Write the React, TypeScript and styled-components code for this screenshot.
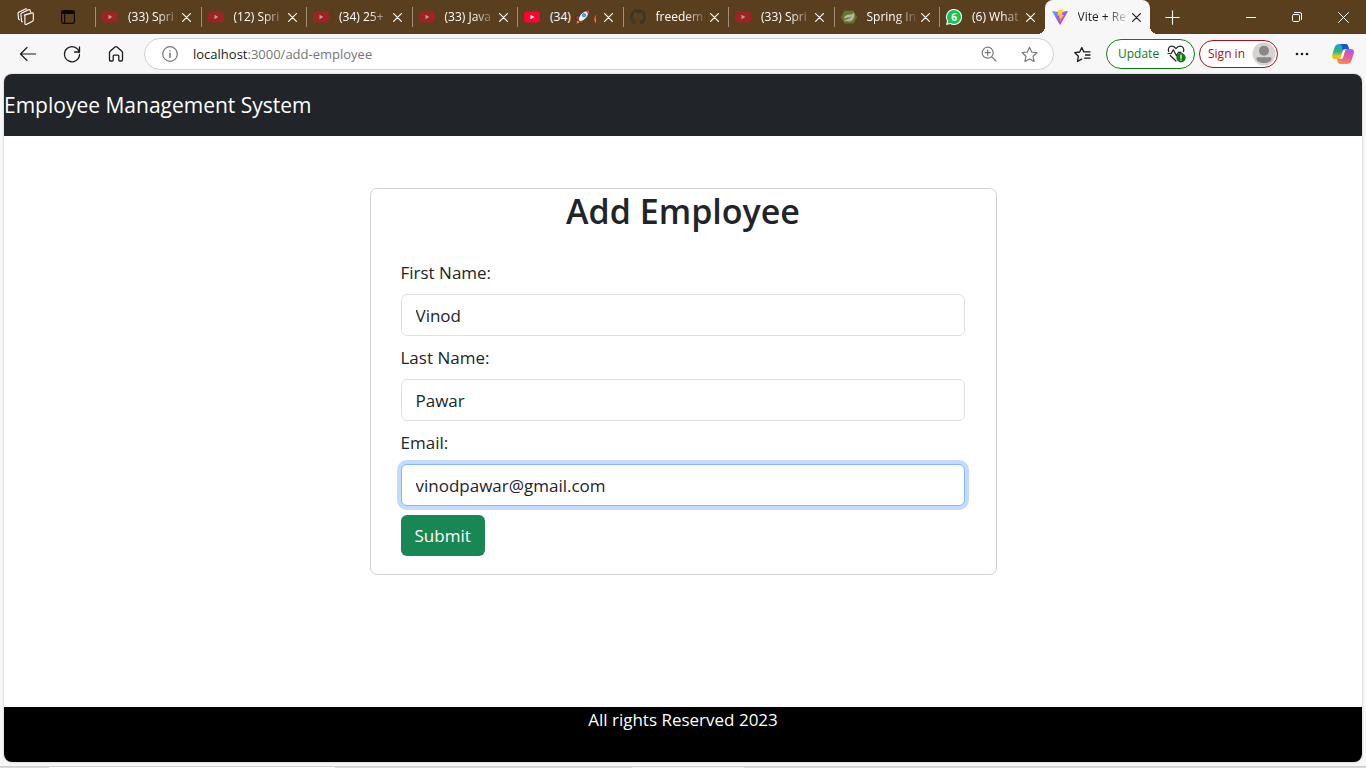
import React from "react";
import styled, { createGlobalStyle, css } from "styled-components";

const GlobalStyle = createGlobalStyle`
  *, *::before, *::after { box-sizing: border-box; }
  body {
    margin: 0;
    background: #f7f7f7;
    color: #212529;
    font-family: "Segoe UI", "Open Sans", "Noto Sans", sans-serif;
  }
  button, input { font-family: inherit; }
  svg { display: block; flex: none; }
`;

const Window = styled.div`
  display: flex;
  flex-direction: column;
  min-height: 100vh;
`;

const iconButton = css`
  display: flex;
  align-items: center;
  justify-content: center;
  flex: none;
  padding: 0;
  border: 0;
  background: transparent;
  color: inherit;
`;

/* Tab strip */

const TabStrip = styled.div`
  display: flex;
  height: 34px;
  background: #5a3f1e;
  color: #fff;
`;

const StripTools = styled.div`
  display: flex;
  padding: 0 6px 0 5px;
`;

const StripButton = styled.button<{ $width: number }>`
  ${iconButton}
  width: ${(p) => p.$width}px;
  height: 34px;
`;

const WindowControls = styled.div`
  display: flex;
  margin-left: 34px;
`;

const Tabs = styled.div`
  display: flex;
  flex: 1;
  min-width: 0;
`;

const Tab = styled.div<{ $active?: boolean }>`
  position: relative;
  display: flex;
  flex: 1 1 0;
  min-width: 0;
  align-items: center;
  padding: 0 9px 0 7px;
  ${(p) =>
    p.$active
      ? css`
          background: #f7f7f7;
          color: #1b1b1b;
          border-radius: 8px 8px 0 0;
          &::before,
          &::after {
            content: "";
            position: absolute;
            bottom: 0;
            width: 8px;
            height: 8px;
          }
          &::before {
            right: 100%;
            background: radial-gradient(circle at 0 0, transparent 8px, #f7f7f7 8px);
          }
          &::after {
            left: 100%;
            background: radial-gradient(circle at 100% 0, transparent 8px, #f7f7f7 8px);
          }
        `
      : css`
          &::before {
            content: "";
            position: absolute;
            left: 0;
            top: 7px;
            width: 1px;
            height: 20px;
            background: #a08f78;
          }
        `}
`;

const TabTitle = styled.span`
  display: flex;
  align-items: center;
  flex: 1;
  min-width: 0;
  margin: 0 1px 0 10px;
  overflow: hidden;
  white-space: nowrap;
  font-size: 12px;
  line-height: 20px;
  mask-image: linear-gradient(to right, #000 55%, transparent);
`;

const EmojiTitle = styled(TabTitle)`
  gap: 4px;
  margin-right: 8px;
  mask-image: none;
`;

const TabClose = styled.button`
  ${iconButton}
  width: 10px;
  height: 20px;
`;

/* Toolbar */

const Toolbar = styled.div`
  display: flex;
  align-items: center;
  height: 40px;
  padding: 0 6px;
  color: #1b1b1b;
`;

const ToolButton = styled.button<{ $width: number }>`
  ${iconButton}
  width: ${(p) => p.$width}px;
  height: 32px;
`;

const AddressBar = styled.div`
  display: flex;
  align-items: center;
  flex: 1;
  min-width: 0;
  height: 32px;
  margin: 0 4px 0 6px;
  padding: 0 4px 0 5px;
  border: 1px solid #d0d0d0;
  border-radius: 16px;
  background: #fff;
  color: #767676;
`;

const Address = styled.div`
  flex: 1;
  min-width: 0;
  padding-left: 3px;
  font-size: 13px;
  line-height: 20px;
  white-space: nowrap;
`;

const Host = styled.span`
  color: #1b1b1b;
`;

const Pill = styled.button<{ $tone: string; $height: number }>`
  display: flex;
  align-items: center;
  flex: none;
  justify-content: space-between;
  height: ${(p) => p.$height}px;
  border: 1px solid ${(p) => p.$tone};
  border-radius: 16px;
  background: #fff;
  color: ${(p) => p.$tone};
  font-size: 12px;
  line-height: 20px;
  white-space: nowrap;
`;

const UpdatePill = styled(Pill)`
  width: 89px;
  margin-right: 4px;
  padding: 0 8px 0 11px;
`;

const SignInPill = styled(Pill)`
  width: 79px;
  padding: 0 1px 0 8px;
`;

/* Page */

const Page = styled.div`
  display: flex;
  flex: 1;
  flex-direction: column;
  margin: 0 4px;
  overflow: hidden;
  border-radius: 8px;
  background: #fff;
  box-shadow: 0 0 2px #b0b0b0;
`;

const Navbar = styled.header`
  display: flex;
  align-items: center;
  height: 62px;
  background: #212529;
`;

const Brand = styled.a`
  color: #fff;
  font-size: 21px;
  line-height: 32px;
  text-decoration: none;
`;

const Main = styled.main`
  flex: 1;
  width: 100%;
  max-width: 1254px;
  margin: 0 auto;
  padding: 52px 0;
`;

const Card = styled.section`
  width: 50%;
  min-width: 320px;
  margin: 0 auto;
  border: 1px solid #d0d1d2;
  border-radius: 7px;
`;

const CardTitle = styled.h2`
  margin: 0;
  font-size: 34px;
  font-weight: 600;
  line-height: 44px;
  text-align: center;
`;

const Form = styled.form`
  display: flex;
  flex-direction: column;
  align-items: flex-start;
  gap: 9px;
  padding: 27px 31px 18px 30px;
`;

const Field = styled.div`
  display: flex;
  flex-direction: column;
  gap: 8px;
  width: 100%;
`;

const Label = styled.label`
  font-size: 17px;
  line-height: 26px;
`;

const TextInput = styled.input<{ $highlighted?: boolean }>`
  width: 100%;
  height: 42px;
  padding: 0 14px;
  border: 1px solid ${(p) => (p.$highlighted ? "#86b7fe" : "#dee2e6")};
  border-radius: 6px;
  outline: 0;
  background: #fff;
  box-shadow: ${(p) => (p.$highlighted ? "0 0 0 4px #c2dbfe" : "none")};
  color: #212529;
  font-size: 17px;
`;

const SubmitButton = styled.button`
  height: 41px;
  padding: 0 14px;
  border: 0;
  border-radius: 6px;
  background: #198754;
  color: #fff;
  font-size: 17px;
  line-height: 26px;
`;

const Footer = styled.footer`
  height: 55px;
  background: #000;
  color: #fff;
  font-size: 17px;
  line-height: 26px;
  text-align: center;
`;

const Taskbar = styled.div`
  display: flex;
  height: 2px;
  margin-top: 4px;
  background: #dadada;
`;

const TaskSlot = styled.div<{ $grow: number; $fill: string }>`
  flex: ${(p) => p.$grow} 1 0;
  border-top: 1px solid #cfcfcf;
  background: ${(p) => p.$fill};
`;

/* Drawings */

const line = { fill: "none", stroke: "currentColor", strokeLinecap: "round", strokeLinejoin: "round" } as const;

const YouTube = ({ muted }: { muted?: boolean }) => (
  <svg width="16" height="16" viewBox="0 0 16 16">
    <rect y="2.5" width="16" height="11" rx="2.5" fill={muted ? "#9b2424" : "#ff0033"} />
    <path d="M6.5 5.8v4.4L10.3 8z" fill={muted ? "#bc9d90" : "#fff"} />
  </svg>
);

const GitHub = () => (
  <svg width="16" height="16" viewBox="0 0 16 16" fill="#413427">
    <path d="M8 0C3.58 0 0 3.58 0 8c0 3.54 2.29 6.53 5.47 7.59.4.07.55-.17.55-.38 0-.19-.01-.82-.01-1.49-2.01.37-2.53-.49-2.69-.94-.09-.23-.48-.94-.82-1.13-.28-.15-.68-.52-.01-.53.63-.01 1.08.58 1.23.82.72 1.21 1.87.87 2.33.66.07-.52.28-.87.51-1.07-1.78-.2-3.64-.89-3.64-3.95 0-.87.31-1.59.82-2.15-.08-.2-.36-1.02.08-2.12 0 0 .67-.21 2.2.82a7.6 7.6 0 0 1 4 0c1.53-1.04 2.2-.82 2.2-.82.44 1.1.16 1.92.08 2.12.51.56.82 1.27.82 2.15 0 3.07-1.87 3.75-3.65 3.95.29.25.54.73.54 1.48 0 1.07-.01 1.93-.01 2.2 0 .21.15.46.55.38A8 8 0 0 0 16 8c0-4.42-3.58-8-8-8z" />
  </svg>
);

const SpringLogo = () => (
  <svg width="16" height="16" viewBox="0 0 16 16">
    <path d="M4.3 1.5h7.4q.7 0 1 .6l3 5.3q.3.6 0 1.2l-3 5.3q-.3.6-1 .6H4.3q-.7 0-1-.6l-3-5.3q-.3-.6 0-1.2l3-5.3q.3-.6 1-.6z" fill="#60762f" />
    <path d="M12.8 3.5c-1 2-2.4 1.7-5.2 2.1C4.7 6 3 7.5 3.1 9.7c1.8-.6 5-.5 7.5-2.6-1.6 2.6-4 3.4-6.8 4 2.5 2.1 6.7 1.7 8.6-1.2 1.4-2.2 1.1-4.4.4-6.4z" fill="#b5b59b" />
    <circle cx="4.1" cy="11.8" r=".7" fill="#b5b59b" />
  </svg>
);

const WhatsApp = () => (
  <svg width="16" height="16" viewBox="0 0 16 16">
    <path d="M8 0a8 8 0 0 0-7 11.9L0 16l4.2-1A8 8 0 1 0 8 0z" fill="#fff" />
    <path d="M8 1.1A6.9 6.9 0 0 0 2.2 11.8l-.7 2.7 2.8-.7A6.9 6.9 0 1 0 8 1.1z" fill="#16c553" />
    <text x="8" y="11.6" fill="#fff" fontSize="10" fontWeight="700" textAnchor="middle">6</text>
  </svg>
);

const ViteLogo = () => (
  <svg width="16" height="16" viewBox="0 0 16 16">
    <defs>
      <linearGradient id="viteShell" x1="0" y1="0" x2=".6" y2="1">
        <stop offset="0" stopColor="#41b9ff" />
        <stop offset=".5" stopColor="#9a58ff" />
        <stop offset="1" stopColor="#bd34fe" />
      </linearGradient>
      <linearGradient id="viteBolt" x1="0" y1="0" x2="0" y2="1">
        <stop offset="0" stopColor="#ffdf40" />
        <stop offset="1" stopColor="#ffa800" />
      </linearGradient>
    </defs>
    <path d="M15.8 2.6 8.4 15.5q-.3.5-.7 0L.2 2.6q-.3-.7.5-.6L8 3.3 15.3 2q.8-.1.5.6z" fill="url(#viteShell)" />
    <path d="M11.4.1 6 1.2l-.4 5.6 2-.4-.6 3 1.5-.4-.8 4.2 4.2-7.5-2 .4z" fill="url(#viteBolt)" />
  </svg>
);

const Rocket = () => (
  <svg width="15" height="16" viewBox="0 0 15 16">
    <path d="M4.5 6.5 1.2 7l-.7 3 3 .2zM8.5 10.5 8 14l-2.8 1-.4-3.5z" fill="#d83b2b" stroke="#222" strokeWidth=".6" />
    <path d="M1.5 15 2.4 11l2.4 2.3z" fill="#ff9f2e" stroke="#a83510" strokeWidth=".5" />
    <path d="M3.2 10.8C4 6 7.6 1.8 14 1.2c0 6-3.6 10-8.8 11.6z" fill="#eaf6ff" stroke="#222" strokeWidth=".7" />
    <path d="M10.5 2.1 14 1.2l-.8 4z" fill="#e6402e" />
    <circle cx="9" cy="6.2" r="1.8" fill="#35b5ef" stroke="#1d577a" strokeWidth=".5" />
  </svg>
);

const Flame = () => (
  <svg width="10" height="14" viewBox="0 0 10 14">
    <path d="M5 0C5 3 0 5 0 9.2 0 12 2 14 5 14s5-2 5-5C10 5 6 4 5 0z" fill="#e8531c" />
    <path d="M5 5C4 7.500 1.500 8 1.500 10.600 1.500 12.800 3 14 5 14s3.500-1.500 3.500-3.500C8.500 8 6 7.500 5 5z" fill="#ffc928" />
  </svg>
);

const CloseGlyph = () => (
  <svg width="9" height="9" viewBox="0 0 9 9" {...line} strokeWidth="1.2">
    <path d="M.6.6l7.800 7.800M8.400.6L.6 8.400" />
  </svg>
);

const Workspaces = () => (
  <svg width="18" height="18" viewBox="0 0 18 18" {...line} strokeWidth="1.100">
    <path d="M7.300 7.100 15 4.900q1.200-.3 1.300.9v6.200q0 .9-.8 1.200l-6.300 3.200q-1.200.4-1.300-.8V8.100q0-.8-.6-1z" />
    <path d="M5.500 13.800q-.7.1-1-.8L3.900 6.400q-.1-1 .8-1.400l7-3.200q1-.4 1.400.5l.5 1.500" />
    <path d="M2.600 11.700q-.8 0-1-.8L1 5.600q-.1-.9.7-1.300L8.400 1q.8-.4 1.400.2" />
  </svg>
);

const TabActions = () => (
  <svg width="14" height="14" viewBox="0 0 14 14" fill="none" stroke="#0b0805" strokeWidth="1.100">
    <rect x=".6" y=".6" width="12.800" height="12.800" rx="2.200" />
    <path d="M1 2.500h12M1 1.500h12M1 3.500h12M3.700 4v9" />
  </svg>
);

const BackArrow = () => (
  <svg width="18" height="16" viewBox="0 0 18 16" {...line} strokeWidth="1.200">
    <path d="M16.500 8H1.500M8 1.500 1.500 8 8 14.500" />
  </svg>
);

const Reload = () => (
  <svg width="18" height="18" viewBox="0 0 18 18" {...line} strokeWidth="1.300">
    <path d="M16.300 7.500A7.500 7.500 0 1 0 16.500 9.500M16.500 2v5h-5" />
  </svg>
);

const Home = () => (
  <svg width="16" height="18" viewBox="0 0 16 18" {...line} strokeWidth="1.300">
    <path d="M1.500 7.600q0-.8.6-1.300L7 2q1-.8 2 0l4.900 4.300q.6.500.6 1.300v7.100q0 1.300-1.300 1.300h-1.400q-1 0-1-1v-4q0-.9-.9-.9H6.100q-.9 0-.9.900v4q0 1-1 1H2.800q-1.300 0-1.300-1.300z" />
  </svg>
);

const Info = () => (
  <svg width="16" height="16" viewBox="0 0 16 16" {...line} strokeWidth="1.200">
    <circle cx="8" cy="8" r="7.300" />
    <path d="M8 7.300v4M8 4.700v.1" strokeWidth="1.500" />
  </svg>
);

const ZoomIn = () => (
  <svg width="16" height="16" viewBox="0 0 16 16" {...line} strokeWidth="1.200">
    <circle cx="6.700" cy="6.700" r="5.500" />
    <path d="M10.800 10.800 15 15M6.700 4.200v5M4.200 6.700h5" />
  </svg>
);

const Star = () => (
  <svg width="17" height="17" viewBox="0 0 17 17" {...line} strokeWidth="1.200">
    <path d="M8.500 1.200 10.700 6l5.100.7-3.700 3.600.9 5.200-4.500-2.500L4 15.500l.9-5.200L1.200 6.700 6.300 6z" />
  </svg>
);

const Favorites = () => (
  <svg width="17" height="17" viewBox="0 0 17 17" {...line} strokeWidth="1.300">
    <path d="M10.500 5.800H16M11.500 9H16M10.500 12.200H16M9.700 5.800 7.800 1.500 5.700 6l-4.900.7 3.600 3.500-.9 5.200 4.200-2.300" />
  </svg>
);

const HeartPulse = () => (
  <svg width="19" height="18" viewBox="0 0 19 18">
    <g {...line} stroke="#222" strokeWidth="1.200">
      <path d="M1.700 6.500C.6 3.700 2.200 1.200 4.800 1.200c1.800 0 3 .9 4.200 2.300 1.200-1.400 2.400-2.300 4.200-2.300 2.600 0 4.300 2.500 3.200 5.300M3.300 10.500 9 16" />
      <path d="M1 8.500h3.300l2-3.700 3.200 6 2-3.500h2.500" />
    </g>
    <circle cx="14" cy="12.800" r="4.700" fill="#107c10" />
    <path d="M14 10.200v3M14 15v.2" stroke="#fff" strokeWidth="1.300" strokeLinecap="round" />
  </svg>
);

const Avatar = () => (
  <svg width="24" height="24" viewBox="0 0 24 24">
    <circle cx="12" cy="12" r="11.500" fill="#d6d4d1" />
    <circle cx="12" cy="8.700" r="5" fill="#8b8987" />
    <path d="M4.500 16.500q0-1.300 1.300-1.300h12.400q1.300 0 1.300 1.300c0 2.800-3.300 4.500-7.500 4.500s-7.500-1.700-7.500-4.500z" fill="#8b8987" />
  </svg>
);

const More = () => (
  <svg width="14" height="4" viewBox="0 0 14 4" fill="#1b1b1b">
    <circle cx="2" cy="2" r="1.300" />
    <circle cx="7" cy="2" r="1.300" />
    <circle cx="12" cy="2" r="1.300" />
  </svg>
);

const Copilot = () => (
  <svg width="22" height="20" viewBox="0 0 22 20">
    <defs>
      <linearGradient id="copilotLeft" x1="0" y1="0" x2="0" y2="1">
        <stop offset="0" stopColor="#199ff0" />
        <stop offset=".5" stopColor="#2eb57b" />
        <stop offset=".8" stopColor="#d7cf22" />
        <stop offset="1" stopColor="#f5b323" />
      </linearGradient>
      <linearGradient id="copilotRight" x1=".6" y1="0" x2=".3" y2="1">
        <stop offset="0" stopColor="#a45bee" />
        <stop offset=".5" stopColor="#ec5b91" />
        <stop offset="1" stopColor="#ff8d48" />
      </linearGradient>
    </defs>
    <path d="M7.500 0h6.300q1.700 0 2.200 1.700L17 5h-3.800q-1.400 0-1.900 1.500L9 13.500q-.6 1.500-2.200 1.500H3.500Q-.8 15 .3 10.500L2.700 3Q3.800 0 7.500 0z" fill="url(#copilotLeft)" />
    <path d="M7.500 0h6.300q1.700 0 2.200 1.700L17 5h-3.800q-1.400 0-1.900 1.500L10.500 9Q10.600 0 7.500 0z" fill="#1757c8" />
    <path d="M14.500 20H8.200q-1.700 0-2.200-1.700L5 15h3.800q1.400 0 1.900-1.500L13 6.500Q13.600 5 15.200 5h3.300q4.300 0 3.200 4.500L19.300 17q-1.100 3-4.800 3z" fill="url(#copilotRight)" />
    <path d="M10.900 5.800h2.300L10.900 14.200H8.600z" fill="#f7f7f7" />
  </svg>
);

const Plus = () => (
  <svg width="15" height="15" viewBox="0 0 15 15" {...line} strokeWidth="1.100">
    <path d="M7.500.8v13.400M.8 7.500h13.400" />
  </svg>
);

const Minimize = () => (
  <svg width="10" height="2" viewBox="0 0 10 2">
    <path d="M0 1.500h10" stroke="#fff" />
  </svg>
);

const Restore = () => (
  <svg width="10" height="10" viewBox="0 0 10 10" {...line}>
    <rect x=".5" y="2.500" width="7" height="7" rx="1.200" />
    <path d="M2.500.5H8A1.500 1.500 0 0 1 9.500 2v5.500" />
  </svg>
);

const WindowClose = () => (
  <svg width="11" height="11" viewBox="0 0 11 11" {...line}>
    <path d="M.5.5l10 10M10.500.5l-10 10" />
  </svg>
);

const tabs: { title: string; icon: React.ReactNode; active?: boolean; emoji?: boolean }[] = [
  { title: "(33) Spri", icon: <YouTube muted /> },
  { title: "(12) Spri", icon: <YouTube muted /> },
  { title: "(34) 25+", icon: <YouTube muted /> },
  { title: "(33) Java", icon: <YouTube muted /> },
  { title: "(34)", icon: <YouTube />, emoji: true },
  { title: "freedem", icon: <GitHub /> },
  { title: "(33) Spri", icon: <YouTube muted /> },
  { title: "Spring In", icon: <SpringLogo /> },
  { title: "(6) What", icon: <WhatsApp /> },
  { title: "Vite + Re", icon: <ViteLogo />, active: true },
];

const fields = [
  { id: "firstName", label: "First Name:", type: "text", value: "Vinod" },
  { id: "lastName", label: "Last Name:", type: "text", value: "Pawar" },
  { id: "email", label: "Email:", type: "email", value: "vinodpawar@gmail.com", highlighted: true },
];

export default function App() {
  return (
    <Window>
      <GlobalStyle />
      <TabStrip>
        <StripTools>
          <StripButton $width={42} aria-label="Workspaces"><Workspaces /></StripButton>
          <StripButton $width={42} aria-label="Tab actions"><TabActions /></StripButton>
        </StripTools>
        <Tabs>
          {tabs.map((tab, i) => (
            <Tab key={i} $active={tab.active}>
              {tab.icon}
              {tab.emoji ? (
                <EmojiTitle>{tab.title}<Rocket /><Flame /></EmojiTitle>
              ) : (
                <TabTitle>{tab.title}</TabTitle>
              )}
              <TabClose aria-label="Close tab"><CloseGlyph /></TabClose>
            </Tab>
          ))}
        </Tabs>
        <StripButton $width={44} aria-label="New tab"><Plus /></StripButton>
        <WindowControls>
          <StripButton $width={46} aria-label="Minimize"><Minimize /></StripButton>
          <StripButton $width={46} aria-label="Restore"><Restore /></StripButton>
          <StripButton $width={46} aria-label="Close window"><WindowClose /></StripButton>
        </WindowControls>
      </TabStrip>

      <Toolbar>
        <ToolButton $width={44} aria-label="Back"><BackArrow /></ToolButton>
        <ToolButton $width={44} aria-label="Refresh"><Reload /></ToolButton>
        <ToolButton $width={44} aria-label="Home"><Home /></ToolButton>
        <AddressBar>
          <ToolButton $width={40} aria-label="Site information"><Info /></ToolButton>
          <Address><Host>localhost</Host>:3000/add-employee</Address>
          <ToolButton $width={40} aria-label="Zoom"><ZoomIn /></ToolButton>
          <ToolButton $width={40} aria-label="Add to favorites"><Star /></ToolButton>
        </AddressBar>
        <ToolButton $width={48} aria-label="Favorites"><Favorites /></ToolButton>
        <UpdatePill $tone="#107c10" $height={30}>Update<HeartPulse /></UpdatePill>
        <SignInPill $tone="#a80f22" $height={28}>Sign in<Avatar /></SignInPill>
        <ToolButton $width={48} aria-label="More"><More /></ToolButton>
        <ToolButton $width={34} aria-label="Copilot"><Copilot /></ToolButton>
      </Toolbar>

      <Page>
        <Navbar>
          <Brand href="#">Employee Management System</Brand>
        </Navbar>
        <Main>
          <Card>
            <CardTitle>Add Employee</CardTitle>
            <Form onSubmit={(e) => e.preventDefault()}>
              {fields.map((f) => (
                <Field key={f.id}>
                  <Label htmlFor={f.id}>{f.label}</Label>
                  <TextInput id={f.id} type={f.type} defaultValue={f.value} $highlighted={f.highlighted} />
                </Field>
              ))}
              <SubmitButton type="submit">Submit</SubmitButton>
            </Form>
          </Card>
        </Main>
        <Footer>All rights Reserved 2023</Footer>
      </Page>

      <Taskbar>
        <TaskSlot $grow={49} $fill="#dadada" />
        <TaskSlot $grow={286} $fill="#ffffff" />
        <TaskSlot $grow={297} $fill="#dadada" />
        <TaskSlot $grow={112} $fill="#f0f0f0" />
        <TaskSlot $grow={622} $fill="#dadada" />
      </Taskbar>
    </Window>
  );
}
